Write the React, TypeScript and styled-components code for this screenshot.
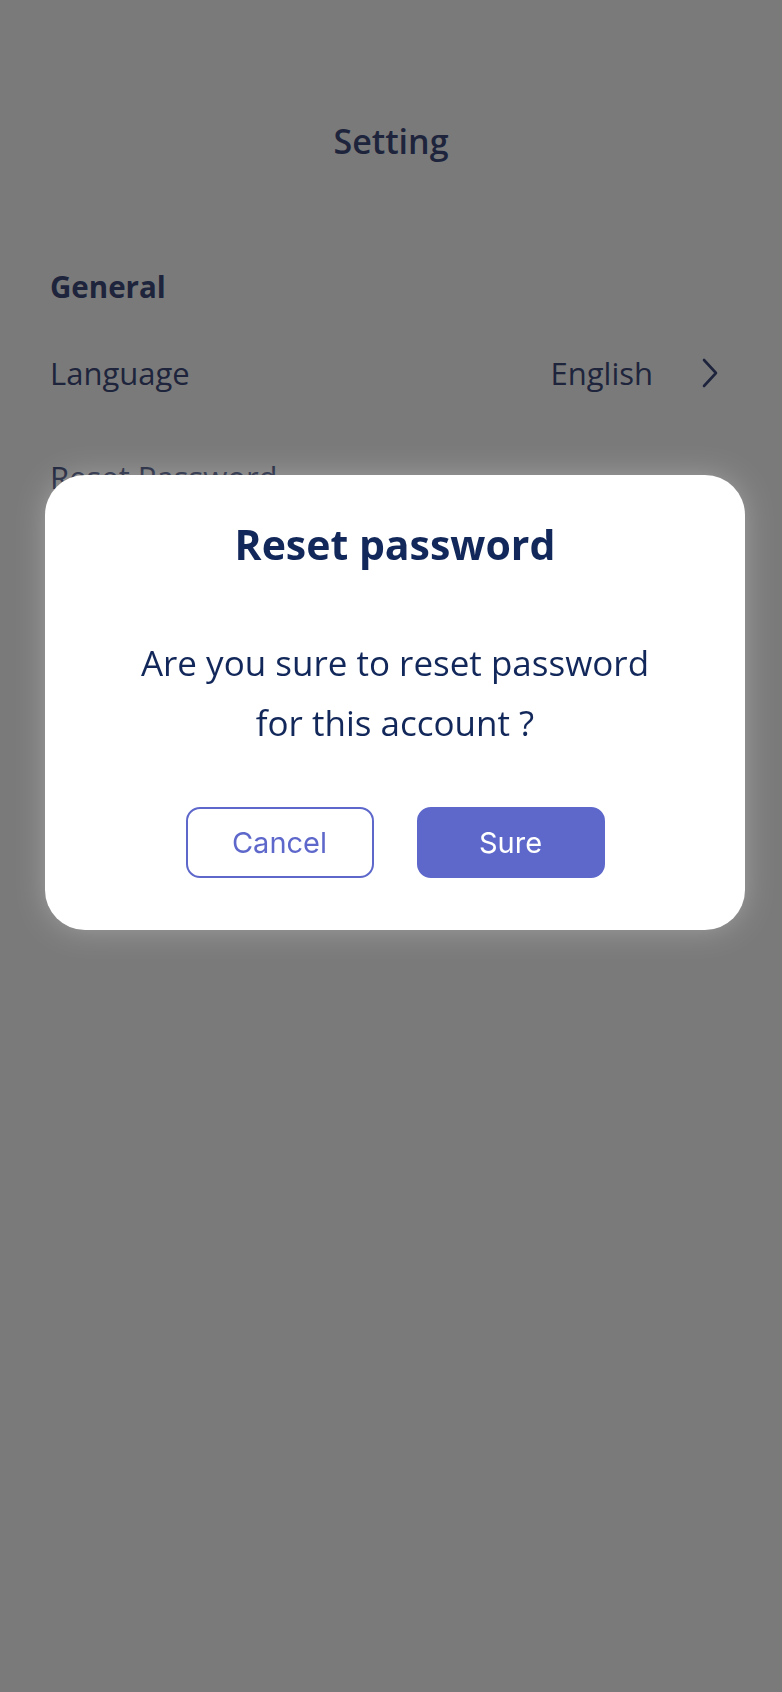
import styled, { createGlobalStyle } from "styled-components";

const GlobalStyle = createGlobalStyle`
  html, body {
    margin: 0;
    padding: 0;
    background: #ffffff;
  }
  * {
    box-sizing: border-box;
  }
`;

const rows = [
  { label: "Language", value: "English" },
  { label: "Reset Password", value: "" },
];

export default function App() {
  return (
    <>
      <GlobalStyle />
      <Page>
        <Title>Setting</Title>
        <SectionTitle>General</SectionTitle>
        {rows.map((row) => (
          <Row key={row.label}>
            <RowLabel>{row.label}</RowLabel>
            {row.value && (
              <RowRight>
                <RowValue>{row.value}</RowValue>
                <Chevron width="18" height="32" viewBox="0 0 18 32">
                  <path
                    d="M3 3 L15 16 L3 29"
                    fill="none"
                    stroke="currentColor"
                    strokeWidth="2.6"
                    strokeLinecap="round"
                    strokeLinejoin="round"
                  />
                </Chevron>
              </RowRight>
            )}
          </Row>
        ))}
      </Page>

      {/* 비밀번호 초기화 확인 모달 */}
      <Backdrop>
        <Dialog>
          <DialogTitle>Reset password</DialogTitle>
          <DialogText>
            Are you sure to reset password
            <br />
            for this account ?
          </DialogText>
          <ButtonRow>
            <Button>Cancel</Button>
            <Button primary>Sure</Button>
          </ButtonRow>
        </Dialog>
      </Backdrop>
    </>
  );
}

interface buttonProps {
  primary?: boolean;
}

const Page = styled.div`
  min-height: 1692px;
  padding: 121px 0 0;
  background: #ffffff;
  font-family: "Open Sans", "Noto Sans", sans-serif;
  color: #3f4d7e;
`;

const Title = styled.h1`
  margin: 0;
  text-align: center;
  font-size: 34px;
  line-height: 40px;
  font-weight: 600;
`;

const SectionTitle = styled.h2`
  margin: 106px 0 14px;
  padding: 0 50px;
  font-size: 29.5px;
  line-height: 40px;
  font-weight: 700;
`;

const Row = styled.div`
  display: flex;
  align-items: center;
  justify-content: space-between;
  padding: 32px 65px 32px 50px;
  font-size: 31px;
  line-height: 40px;
`;

const RowLabel = styled.span`
  font-weight: 400;
`;

const RowRight = styled.div`
  display: flex;
  align-items: center;
  gap: 48px;
`;

const RowValue = styled.span`
  font-weight: 400;
`;

const Chevron = styled.svg`
  display: block;
  margin-right: -2px;
`;

const Backdrop = styled.div`
  position: fixed;
  inset: 0;
  display: flex;
  justify-content: flex-start;
  align-items: flex-start;
  padding: 475px 0 0 45px;
  background: rgba(0, 0, 0, 0.52);
`;

const Dialog = styled.div`
  width: 700px;
  padding: 45px 0 52px;
  background: #ffffff;
  border-radius: 40px;
  box-shadow: 0 0 28px rgba(255, 255, 255, 0.28);
  text-align: center;
  font-family: "Open Sans", "Noto Sans", sans-serif;
  color: #13285a;
`;

const DialogTitle = styled.h3`
  margin: 0;
  font-size: 41px;
  line-height: 48px;
  font-weight: 700;
`;

const DialogText = styled.p`
  margin: 65px 0 0;
  font-size: 35px;
  line-height: 60px;
  font-weight: 400;
`;

const ButtonRow = styled.div`
  display: flex;
  justify-content: center;
  gap: 43px;
  margin-top: 54px;
`;

const Button = styled.button<buttonProps>`
  width: 188px;
  height: 71px;
  border-radius: 14px;
  border: 2.5px solid #5e68cb;
  background: ${(props) => (props.primary ? "#5e68cb" : "#ffffff")};
  color: ${(props) => (props.primary ? "#ffffff" : "#5e68cb")};
  font-family: "Inter", "Liberation Sans", sans-serif;
  font-size: 29px;
  font-weight: 400;
  cursor: pointer;
`;
